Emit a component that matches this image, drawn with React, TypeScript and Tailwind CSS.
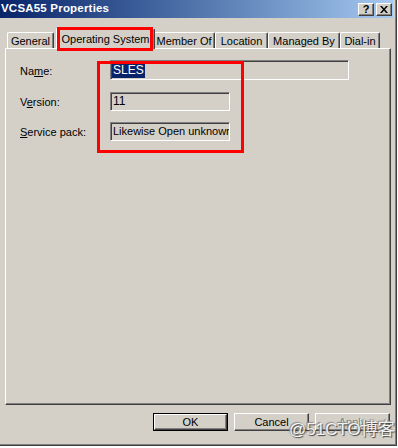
import React from "react";

const raised =
  "border border-t-white border-l-white border-r-[#404040] border-b-[#404040] shadow-[inset_-1px_-1px_0_#808080]";
const sunken =
  "border border-t-[#808080] border-l-[#808080] border-r-white border-b-white shadow-[inset_1px_1px_0_#404040]";

function Tab({ label, w, active }: { label: string; w: number; active?: boolean }) {
  if (active) {
    return (
      <div
        style={{ width: w }}
        className="relative z-10 -mx-[2px] -mb-[1px] h-[21px] bg-[#d4d0c8] border-t border-l border-white border-r border-r-[#404040] shadow-[inset_-1px_0_0_#808080] rounded-t-[2px] flex items-start justify-center pt-[2px]"
      >
        {label}
      </div>
    );
  }
  return (
    <div
      style={{ width: w }}
      className="h-[16px] border-t border-l border-white border-r border-r-[#404040] shadow-[inset_-1px_0_0_#808080] rounded-t-[2px] flex items-center justify-center pt-[1px]"
    >
      {label}
    </div>
  );
}

export default function App() {
  return (
    <div
      className="relative w-[398px] h-[448px] bg-white overflow-hidden text-[11px] text-black"
      style={{ fontFamily: '"Liberation Sans", Arial, sans-serif' }}
    >
      {/* window */}
      <div className="w-[397px] h-[446px] bg-[#d4d0c8] border-r border-b border-[#404040]">
        <div className="h-full border-r border-b border-[#808080] pr-[2px] flex flex-col">
          {/* title bar */}
          <div className="h-[18px] bg-gradient-to-r from-[#0a246a] to-[#a6caf0] flex items-center justify-between pl-[1px] pr-[1px]">
            <span className="text-white font-bold text-[11.5px] tracking-[0.2px]">VCSA55 Properties</span>
            <div className="flex gap-[2px]">
              <div className={`w-[16px] h-[13px] bg-[#d4d0c8] ${raised} flex items-center justify-center font-bold text-[11px] leading-none`}>
                ?
              </div>
              <div className={`w-[16px] h-[13px] bg-[#d4d0c8] ${raised} flex items-center justify-center`}>
                <svg width="8" height="7" viewBox="0 0 8 7">
                  <path d="M0 0h2l2 2.5L6 0h2L5 3.5 8 7H6L4 4.5 2 7H0l3-3.5z" fill="#000" />
                </svg>
              </div>
            </div>
          </div>

          {/* tabs */}
          <div className="mt-[10px] ml-[7px] flex items-end h-[20px]">
            <Tab label="General" w={47} />
            <div className="w-[4px]" />
            <Tab label="Operating System" w={99} active />
            <Tab label="Member Of" w={62} />
            <Tab label="Location" w={53} />
            <Tab label="Managed By" w={72} />
            <Tab label="Dial-in" w={40} />
          </div>

          {/* panel */}
          <div className="ml-[5px] w-[386px] h-[357px] border-t border-l border-white border-r border-b border-r-[#404040] border-b-[#404040] shadow-[inset_-1px_-1px_0_#808080] pt-[11px] pl-[14px] flex flex-col gap-[12px]">
            <div className="flex items-center h-[20px]">
              <span className="w-[90px] pt-[2px]">
                Na<span className="underline">m</span>e:
              </span>
              <div className={`w-[239px] h-[20px] ${sunken} flex items-center pl-[1px]`}>
                <span className="bg-[#0a246a] text-white px-[1px] leading-[15px] text-[12px]">SLES</span>
              </div>
            </div>
            <div className="flex items-center h-[18px]">
              <span className="w-[90px] pt-[2px]">
                V<span className="underline">e</span>rsion:
              </span>
              <div className={`w-[120px] h-[19px] ${sunken} flex items-center pl-[2px] text-[12px]`}>11</div>
            </div>
            <div className="flex items-center h-[18px]">
              <span className="w-[90px] pt-[2px]">
                <span className="underline">S</span>ervice pack:
              </span>
              <div className={`w-[120px] h-[19px] ${sunken} flex items-center pl-[2px] overflow-hidden whitespace-nowrap text-[11px]`}>
                Likewise Open unknown
              </div>
            </div>
          </div>

          {/* buttons */}
          <div className="mt-[8px] flex justify-end gap-[6px] pr-[3px]">
            <div className="w-[75px] h-[18px] border border-black">
              <div className={`h-full ${raised} flex items-center justify-center`}>OK</div>
            </div>
            <div className={`w-[75px] h-[18px] ${raised} flex items-center justify-center`}>Cancel</div>
            <div className={`w-[75px] h-[18px] ${raised} flex items-center justify-center text-[#808080] [text-shadow:1px_1px_0_#fff]`}>
              Apply
            </div>
          </div>
        </div>
      </div>

      {/* annotation boxes */}
      <div className="absolute z-20 left-[57px] top-[27px] w-[96px] h-[24px] border-[3px] border-[#ff0000]" />
      <div className="absolute z-20 left-[97px] top-[61px] w-[147px] h-[92px] border-[3px] border-[#ff0000]" />

      {/* watermark */}
      <div
        className="absolute z-20 left-[289px] top-[420px] whitespace-nowrap text-[17px] leading-[20px] text-white/90 [text-shadow:1px_1px_1px_#444,-1px_-1px_1px_#888]"
        style={{ fontFamily: '"Liberation Sans", "Noto Sans CJK SC", sans-serif' }}
      >
        @51CTO博客
      </div>
    </div>
  );
}
